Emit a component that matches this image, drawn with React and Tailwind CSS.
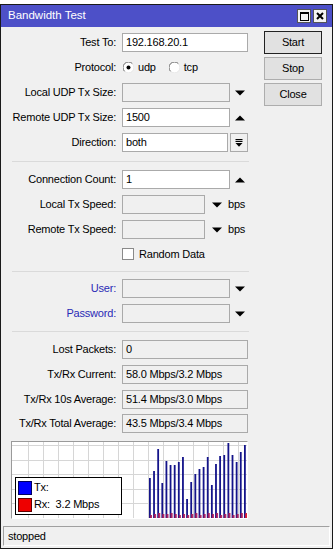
import React from 'react'

const tx = [478, 471, 449, 483, 461, 465, 465, 462, 457, 499, 482, 474, 469, 467, 457, 485, 464, 456, 455, 443, 455, 462, 452, 445]
const rx = [3, 4, 5, 4, 4, 5, 4, 3, 4, 3, 4, 5, 3, 4, 5, 4, 5, 3, 4, 5, 3, 4, 5, 4]

function Down() {
  return (
    <svg width="10" height="6" viewBox="0 0 10 6">
      <path d="M0 0.5H10L5 5.5Z" fill="#000" />
    </svg>
  )
}

function Up() {
  return (
    <svg width="10" height="6" viewBox="0 0 10 6">
      <path d="M0 5.5H10L5 0.5Z" fill="#000" />
    </svg>
  )
}

function Radio({ on }) {
  return (
    <svg width="11" height="11" viewBox="0 0 11 11">
      <circle cx="5.5" cy="5.5" r="5" fill="#fff" />
      <path d="M1.6 9.4A5 5 0 0 1 9.4 1.6" stroke="#6a6a6a" strokeWidth="1" fill="none" />
      <path d="M9.4 1.6A5 5 0 0 1 1.6 9.4" stroke="#e8e8e8" strokeWidth="1" fill="none" />
      {on && <circle cx="5.5" cy="5.5" r="2" fill="#000" />}
    </svg>
  )
}

function Row({ label, blue, h = 'h-[25px]', children }) {
  return (
    <div className={`flex items-center ${h}`}>
      <span className={`w-[115px] shrink-0 text-right ${blue ? 'text-[#2a2ab6]' : 'text-black'}`}>{label}</span>
      <div className="ml-[6px] flex items-center">{children}</div>
    </div>
  )
}

function Field({ w, value, white }) {
  return (
    <div className={`${w} h-[19px] border border-[#aaaaaa] ${white ? 'bg-white' : 'bg-[#f0f0f0]'} flex items-center pl-[3px] leading-none`}>
      {value}
    </div>
  )
}

function Sep({ h = 'h-[12px]' }) {
  return (
    <div className={`flex items-center ${h}`}>
      <div className="ml-[11px] w-[237px] h-px bg-[#dadada]" />
    </div>
  )
}

function Graph() {
  const vlines = []
  for (let x = 16; x < 236; x += 15) vlines.push(x)
  const hlines = []
  for (let i = 0; i < 6; i++) hlines.push(3 + i * 14.6)
  return (
    <div className="ml-[10px] mt-[6px] w-[237px] h-[78px] border-t border-l border-[#9a9a9a] border-r border-b border-r-white border-b-white bg-white relative">
      <svg width="235" height="76" viewBox="0 0 235 76" className="block">
        {vlines.map((x) => (
          <line key={'v' + x} x1={x + 0.5} y1="0" x2={x + 0.5} y2="76" stroke="#d6d6d6" strokeWidth="1" />
        ))}
        {hlines.map((y) => (
          <line key={'h' + y} x1="0" y1={Math.round(y) + 0.5} x2="235" y2={Math.round(y) + 0.5} stroke="#d6d6d6" strokeWidth="1" />
        ))}
        {tx.map((t, i) => {
          const x = 137 + i * 4.13
          return <rect key={'t' + i} x={x} y={t - 442} width="1.8" height={518 - t} fill="#14148a" />
        })}
        {rx.map((r, i) => {
          const x = 137.8 + i * 4.13
          return <rect key={'r' + i} x={x} y={76 - r} width="2.2" height={r} fill="#a8185a" opacity="0.9" />
        })}
        <rect x="233.5" y="71" width="1.5" height="5" fill="#e02030" />
      </svg>
      <div className="absolute left-[3px] top-[35px] w-[107px] h-[38px] bg-white border border-black flex flex-col justify-center gap-[2px] pl-[2px]">
        <div className="flex items-center h-[15px]">
          <div className="w-[14px] h-[14px] bg-[#0000ff] border border-[#000060]" />
          <span className="ml-[2px]">Tx:</span>
        </div>
        <div className="flex items-center h-[15px]">
          <div className="w-[14px] h-[14px] bg-[#ee0000] border border-[#600000]" />
          <span className="ml-[2px]">Rx:&nbsp; 3.2 Mbps</span>
        </div>
      </div>
    </div>
  )
}

export default function App() {
  return (
    <div className="w-[336px] h-[551px] bg-white pt-[4px] overflow-hidden font-['Liberation_Sans',Arial,sans-serif] text-[11px] tracking-[-0.2px] text-black">
      <div className="w-[333px] border border-[#1a1a1a] bg-[#f0f0f0]">
        {/* Title bar */}
        <div className="h-[22px] bg-[#4d50c8] flex items-center pl-[7px] pr-[5px]">
          <span className="text-white text-[11.5px] tracking-normal">Bandwidth Test</span>
          <div className="ml-auto flex gap-[2px]">
            <div className="w-[14px] h-[14px] bg-[#f4f4f4] border border-[#555] flex items-center justify-center">
              <div className="w-[9px] h-[9px] border border-black border-t-2" />
            </div>
            <div className="w-[14px] h-[14px] bg-[#f4f4f4] border border-[#555] flex items-center justify-center">
              <svg width="8" height="8" viewBox="0 0 8 8">
                <path d="M1 1L7 7M7 1L1 7" stroke="#000" strokeWidth="2" />
              </svg>
            </div>
          </div>
        </div>

        <div className="flex">
          {/* Left column */}
          <div className="w-[263px] pt-[3px]">
            <Row label="Test To:">
              <Field w="w-[126px]" value="192.168.20.1" white />
            </Row>
            <Row label="Protocol:">
              <div className="flex items-center">
                <span className="ml-[1px]"><Radio on /></span>
                <span className="ml-[4px]">udp</span>
                <span className="ml-[13px]"><Radio /></span>
                <span className="ml-[4px]">tcp</span>
              </div>
            </Row>
            <Row label="Local UDP Tx Size:">
              <Field w="w-[108px]" value="" />
              <span className="ml-[5px]"><Down /></span>
            </Row>
            <Row label="Remote UDP Tx Size:">
              <Field w="w-[108px]" value="1500" white />
              <span className="ml-[5px]"><Up /></span>
            </Row>
            <Row label="Direction:">
              <Field w="w-[106px]" value="both" white />
              <div className="ml-[2px] w-[18px] h-[19px] border border-[#aaaaaa] bg-[#f0f0f0] flex items-center justify-center">
                <svg width="8" height="8" viewBox="0 0 8 8">
                  <rect x="0.5" y="0" width="7" height="1.2" fill="#000" />
                  <rect x="0.5" y="2" width="7" height="1" fill="#000" />
                  <path d="M0.5 4H7.5L4 7.8Z" fill="#000" />
                </svg>
              </div>
            </Row>
            <Sep />
            <Row label="Connection Count:">
              <Field w="w-[108px]" value="1" white />
              <span className="ml-[5px]"><Up /></span>
            </Row>
            <Row label="Local Tx Speed:">
              <Field w="w-[83px]" value="" />
              <span className="ml-[7px]"><Down /></span>
              <span className="ml-[6px]">bps</span>
            </Row>
            <Row label="Remote Tx Speed:">
              <Field w="w-[83px]" value="" />
              <span className="ml-[7px]"><Down /></span>
              <span className="ml-[6px]">bps</span>
            </Row>
            <Row label="" h="h-[24px]">
              <div className="w-[12px] h-[12px] border border-[#8a8a8a] bg-white" />
              <span className="ml-[5px]">Random Data</span>
            </Row>
            <Sep h="h-[10px]" />
            <Row label="User:" blue>
              <Field w="w-[108px]" value="" />
              <span className="ml-[5px]"><Down /></span>
            </Row>
            <Row label="Password:" blue>
              <Field w="w-[108px]" value="" />
              <span className="ml-[5px]"><Down /></span>
            </Row>
            <Sep h="h-[10px]" />
            <Row label="Lost Packets:" h="h-[26px]">
              <Field w="w-[126px]" value="0" />
            </Row>
            <Row label="Tx/Rx Current:">
              <Field w="w-[126px]" value="58.0 Mbps/3.2 Mbps" />
            </Row>
            <Row label="Tx/Rx 10s Average:" h="h-[24px]">
              <Field w="w-[126px]" value="51.4 Mbps/3.0 Mbps" />
            </Row>
            <Row label="Tx/Rx Total Average:" h="h-[24px]">
              <Field w="w-[126px]" value="43.5 Mbps/3.4 Mbps" />
            </Row>
            <Graph />
          </div>

          {/* Buttons */}
          <div className="pt-[4px] flex flex-col gap-[3px]">
            <button className="w-[58px] h-[23px] bg-[#e1e1e1] border border-[#222]">Start</button>
            <button className="w-[58px] h-[23px] bg-[#e1e1e1] border border-[#adadad]">Stop</button>
            <button className="w-[58px] h-[23px] bg-[#e1e1e1] border border-[#adadad]">Close</button>
          </div>
        </div>

        {/* Status bar */}
        <div className="mt-[7px] mb-[2px] mx-[2px] h-[20px] border-t border-l border-[#a0a0a0] border-r border-b border-r-white border-b-white flex items-center pl-[4px]">
          stopped
        </div>
      </div>
    </div>
  )
}
